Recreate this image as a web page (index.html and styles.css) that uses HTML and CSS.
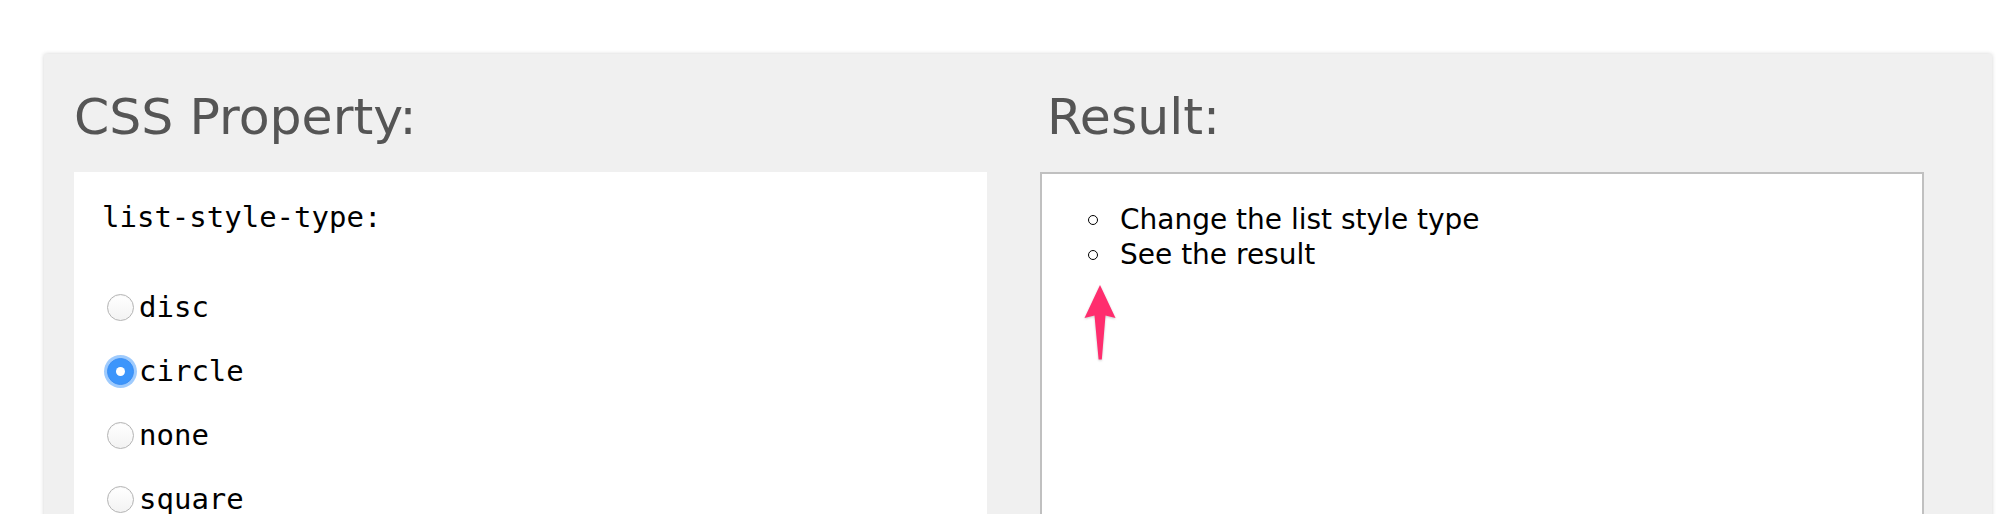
FILE: index.html
```html
<!DOCTYPE html>
<html lang="en">
<head>
<meta charset="utf-8">
<title>list-style-type</title>
<link rel="stylesheet" href="styles.css">
</head>
<body>
<div class="panel">
  <section class="col">
    <h2 class="title">CSS Property:</h2>
    <div class="props">
      <div class="prop-name">list-style-type:</div>
      <div class="options">
        <label class="opt"><input type="radio" name="lst" class="radio">disc</label>
        <label class="opt"><input type="radio" name="lst" class="radio" checked>circle</label>
        <label class="opt"><input type="radio" name="lst" class="radio">none</label>
        <label class="opt"><input type="radio" name="lst" class="radio">square</label>
      </div>
    </div>
  </section>
  <section class="col col-result">
    <h2 class="title">Result:</h2>
    <div class="result">
      <ul class="demo-list">
        <li class="demo-item">Change the list style type</li>
        <li class="demo-item">See the result</li>
      </ul>
      <svg class="arrow" width="32" height="76" viewBox="0 0 32 76" aria-hidden="true">
        <path d="M16 0 L31.5 33 L21.5 30.5 L17.8 74.5 L14.6 74.5 L10.5 30.5 L0.5 33 Z" fill="#ff2d6e"/>
      </svg>
    </div>
  </section>
</div>
</body>
</html>
```

FILE: styles.css
```css
html, body {
  margin: 0;
  padding: 0;
  background: #ffffff;
}

body {
  padding: 54px 8px 0 44px;
  font-family: "DejaVu Sans", Verdana, sans-serif;
  overflow: hidden;
}

.panel {
  background: #f0f0f0;
  box-shadow: 0 0 4px rgba(0, 0, 0, 0.18);
  border-radius: 2px;
  display: grid;
  grid-template-columns: 913px 884px;
  column-gap: 53px;
  padding: 34px 65px 0 30px;
  min-height: 600px;
}

.col {
  display: flex;
  flex-direction: column;
}

.title {
  margin: 0 0 26px 0;
  font-weight: normal;
  font-size: 50.5px;
  line-height: 58px;
  color: #555555;
}

.col-result .title {
  margin-left: 7px;
}

.props {
  background: #ffffff;
  padding: 28px 31px 0 28px;
  min-height: 500px;
}

.prop-name {
  font-family: "DejaVu Sans Mono", Menlo, monospace;
  font-size: 29px;
  line-height: 34px;
  color: #000;
  margin-bottom: 56px;
}

.options {
  display: flex;
  flex-direction: column;
  gap: 30px;
}

.opt {
  display: flex;
  align-items: center;
  font-family: "DejaVu Sans Mono", Menlo, monospace;
  font-size: 29px;
  line-height: 34px;
  color: #000;
}

.radio {
  -webkit-appearance: none;
  appearance: none;
  width: 27px;
  height: 27px;
  margin: 0 5px 0 5px;
  border-radius: 50%;
  border: 1px solid #b4b4b4;
  background: linear-gradient(#ffffff, #f3f3f3);
  box-shadow: inset 0 1px 1px rgba(0, 0, 0, 0.04);
  box-sizing: border-box;
  position: relative;
  flex: none;
}

.radio:checked {
  border-color: #3b8ff5;
  background: #3c95fb;
  box-shadow: 0 0 0 3px rgba(80, 160, 252, 0.55);
}

.radio:checked::after {
  content: "";
  position: absolute;
  left: 50%;
  top: 50%;
  width: 9px;
  height: 9px;
  margin: -4.5px 0 0 -4.5px;
  border-radius: 50%;
  background: #ffffff;
}

.result {
  position: relative;
  background: #ffffff;
  border: 2px solid #c0c0c0;
  border-bottom: none;
  min-height: 500px;
}

.demo-list {
  list-style: none;
  margin: 28px 0 0 0;
  padding-left: 78px;
  font-family: "DejaVu Sans", Verdana, sans-serif;
  font-size: 28px;
  line-height: 35px;
  color: #000;
}

.demo-item {
  position: relative;
}

.demo-item::before {
  content: "";
  position: absolute;
  left: -32px;
  top: 13px;
  width: 10px;
  height: 10px;
  box-sizing: border-box;
  border: 1.6px solid #000;
  border-radius: 50%;
}

.arrow {
  position: absolute;
  left: 42px;
  top: 111px;
  filter: drop-shadow(0 1px 1px rgba(0, 0, 0, 0.2));
}
```
